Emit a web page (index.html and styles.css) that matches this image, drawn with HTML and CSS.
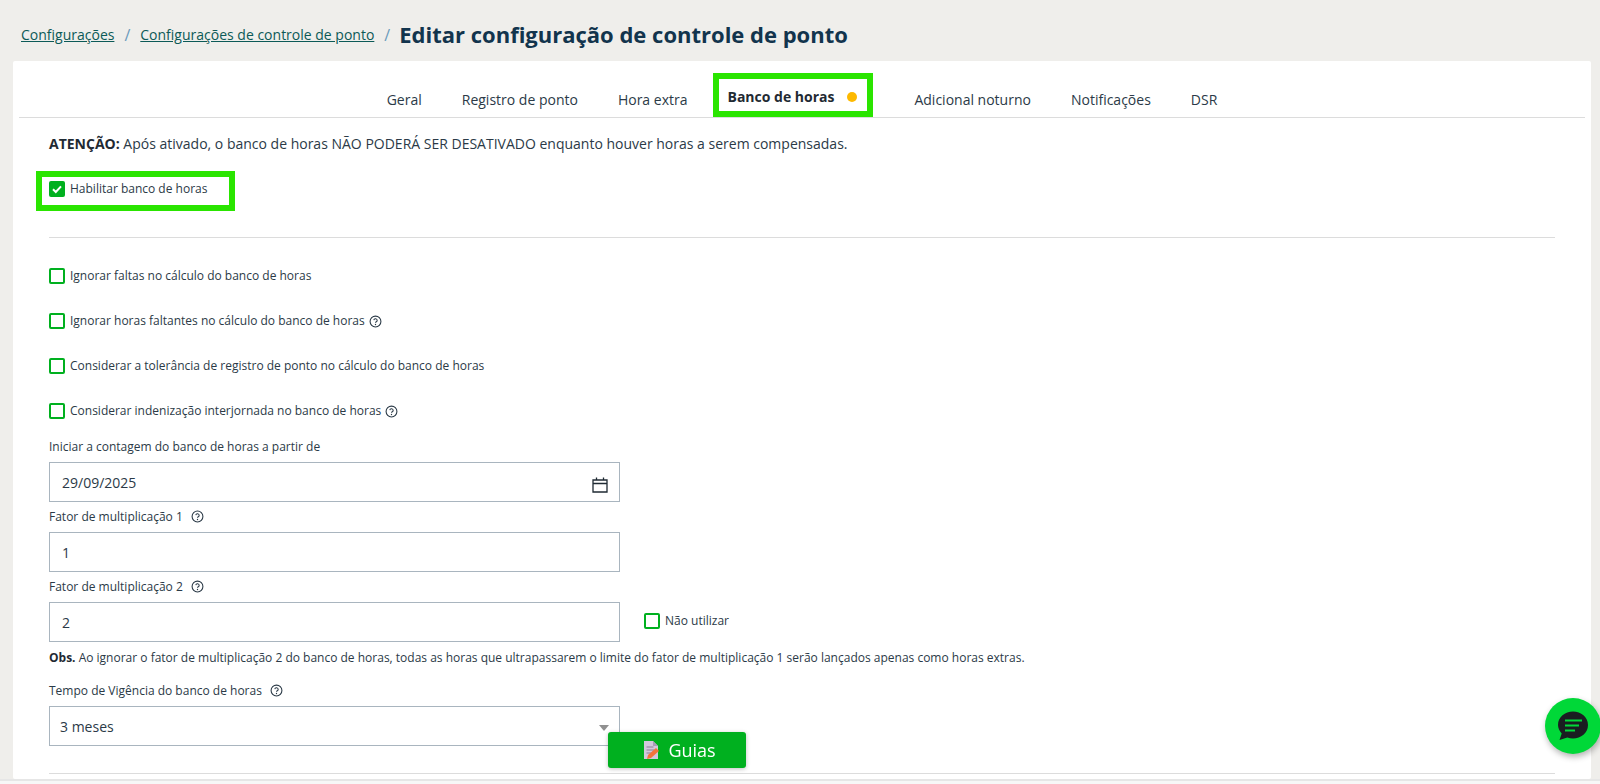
FILE: index.html
```html
<!DOCTYPE html>
<html lang="pt-BR">
<head>
<meta charset="utf-8">
<title>Editar configuração de controle de ponto</title>
<link rel="stylesheet" href="styles.css">
</head>
<body>
<svg class="defs" width="0" height="0" aria-hidden="true"><defs>
<symbol id="help" viewBox="0 0 24 24"><circle cx="12" cy="12" r="10" fill="none" stroke="currentColor" stroke-width="2"/><path d="M8.800 9.300a3.200 3.200 0 0 1 6.300.7c0 2.200-3.100 2.600-3.100 4.300" fill="none" stroke="currentColor" stroke-width="2"/><circle cx="12" cy="17.400" r="1.300" fill="currentColor"/></symbol>
</defs></svg>
<header class="crumbs">
  <a href="#">Configurações</a><span class="sep">/</span>
  <a href="#">Configurações de controle de ponto</a><span class="sep">/</span>
  <h1>Editar configuração de controle de ponto</h1>
</header>
<main class="card">
  <nav class="tabs">
    <span class="tab">Geral</span>
    <span class="tab">Registro de ponto</span>
    <span class="tab">Hora extra</span>
    <span class="tab active">Banco de horas<i class="dot"></i></span>
    <span class="tab">Adicional noturno</span>
    <span class="tab">Notificações</span>
    <span class="tab">DSR</span>
  </nav>
  <section class="body">
    <p class="notice"><b>ATENÇÃO:</b> Após ativado, o banco de horas NÃO PODERÁ SER DESATIVADO enquanto houver horas a serem compensadas.</p>
    <div class="mark">
      <label class="check"><span class="box on"><svg viewBox="0 0 16 16"><path d="M4 8.300l2.800 2.700L12 5.400" fill="none" stroke="#fff" stroke-width="2"/></svg></span>Habilitar banco de horas</label>
    </div>
    <hr class="rule first">
    <label class="check row"><span class="box"></span>Ignorar faltas no cálculo do banco de horas</label>
    <label class="check row"><span class="box"></span>Ignorar horas faltantes no cálculo do banco de horas<svg class="help"><use href="#help"/></svg></label>
    <label class="check row"><span class="box"></span>Considerar a tolerância de registro de ponto no cálculo do banco de horas</label>
    <label class="check row"><span class="box"></span>Considerar indenização interjornada no banco de horas<svg class="help"><use href="#help"/></svg></label>

    <div class="label l-start">Iniciar a contagem do banco de horas a partir de</div>
    <div class="field">29/09/2025
      <svg class="cal" viewBox="0 0 16 16"><path d="M1 3h14v12H1zM1 6.500h14M4.500 .5v3M11.500 .5v3" fill="none" stroke="#1f2a33" stroke-width="1.300"/></svg>
    </div>
    <div class="label">Fator de multiplicação 1<svg class="help wide"><use href="#help"/></svg></div>
    <div class="field">1</div>
    <div class="label">Fator de multiplicação 2<svg class="help wide"><use href="#help"/></svg></div>
    <div class="inline">
      <div class="field">2</div>
      <label class="check nudge"><span class="box"></span>Não utilizar</label>
    </div>
    <p class="obs"><b>Obs.</b> Ao ignorar o fator de multiplicação 2 do banco de horas, todas as horas que ultrapassarem o limite do fator de multiplicação 1 serão lançados apenas como horas extras.</p>
    <div class="label l-time">Tempo de Vigência do banco de horas<svg class="help wide"><use href="#help"/></svg></div>
    <div class="field select">3 meses<i class="caret"></i></div>
    <hr class="rule last">
  </section>
</main>
<div class="foot"></div>
<button class="guias"><svg viewBox="0 0 18 20" width="18" height="20"><path d="M2 1h9l5 5v13H2z" fill="#d3c8dc"/><path d="M11 1l5 5h-5z" fill="#a99bb8"/><path d="M4.500 7h7M4.500 10h8M4.500 13h5" stroke="#8b7f98" stroke-width="1.100"/><path d="M5 19l1-4 8-7 3 3-8 7z" fill="#f4743b"/></svg>Guias</button>
<button class="chat" aria-label="Chat"><svg viewBox="0 0 32 32" width="32" height="32"><path d="M16 1.500c8 0 15 5.500 15 13.500s-7 13.500-15 13.500c-2 0-4-.3-5.700-1L2.500 30l2.200-6.500C2.500 21 1 18.200 1 15 1 7 8 1.500 16 1.500z" fill="#1a1d21"/><path d="M8 10.500h17M8 15.500h14M8 20.500h10" stroke="#00d838" stroke-width="2.200"/></svg></button>
```
FILE: styles.css
```css
* { box-sizing: border-box; }
html, body { height: 784px; overflow: hidden; }
body {
  margin: 0;
  background: #efeeeb;
  font-family: "Open Sans", sans-serif;
  color: #2b3a47;
  font-size: 12px;
}
.defs { position: absolute; }
.crumbs {
  height: 61px;
  padding: 8px 0 0 21px;
  display: flex;
  align-items: center;
  font-size: 14px;
}
.crumbs a { color: #0c5a57; text-decoration: underline; }
.sep { color: #6b9bbb; margin: 0 10px; font-size: 16px; }
.crumbs .sep:last-of-type { margin-right: 9px; }
h1 { margin: -2px 0 0; font-size: 22px; font-weight: 700; color: #12344d; }
.card {
  margin: 0 9px 0 13px;
  height: 718px;
  background: #fff;
  border-radius: 2px;
  padding: 0 6px;
}
.foot { height: 5px; background: #f7f7f7; border-top: 2px solid #e6e6e6; }
.tabs {
  height: 57px;
  display: flex;
  justify-content: center;
  align-items: flex-end;
  border-bottom: 1px solid #dcdcdc;
  font-size: 14px;
  color: #2b3a47;
}
.tab { padding: 0 20px; height: 44px; line-height: 54px; white-space: nowrap; }
.tab.active {
  margin: 0 21px 0 6px;
  padding: 4px 10px 0 8px;
  border: 6px solid #2ae500;
  line-height: 34px;
  font-weight: 700;
  color: #1f2a33;
  display: flex;
  align-items: center;
}
.dot { width: 10px; height: 10px; border-radius: 50%; background: #fdb900; margin-left: 13px; }
.body { padding: 0 30px; }
.notice { margin: 0; padding-top: 16px; line-height: 20px; font-size: 14px; }
.notice b { color: #1f2a33; }
.mark {
  margin: 17px 0 0 -13px;
  width: 199px;
  height: 40px;
  border: 6px solid #2ae500;
  padding: 4px 0 0 7px;
}
.check { display: flex; align-items: center; font-size: 12px; line-height: 16px; white-space: nowrap; }
.box {
  width: 16px; height: 16px;
  border: 2px solid #00b01f;
  border-radius: 2px;
  margin-right: 5px;
  flex: none;
  background: #fff;
}
.box.on { background: #00b01f; border: 0; display: block; }
.box svg { display: block; width: 16px; height: 16px; }
.rule { border: 0; border-top: 1px solid #dcdcdc; margin: 0; }
.rule.first { margin-top: 26px; margin-bottom: 30px; }
.rule.last { margin-top: 27px; }
.row { height: 16px; margin-bottom: 29px; }
.row:last-of-type { margin-bottom: 9px; }
.help { width: 13px; height: 13px; margin-left: 4px; color: #2b3a47; display: inline-block; flex: none; }
.help.wide { margin-left: 8px; vertical-align: -2px; }
.label { height: 30px; line-height: 29px; font-size: 12px; white-space: nowrap; }
.l-start { height: 34px; line-height: 38px; }
.l-time { height: 36px; line-height: 42px; }
.field {
  position: relative;
  width: 571px;
  height: 40px;
  border: 1px solid #a9b5bf;
  line-height: 40px;
  padding-left: 12px;
  font-size: 14px;
  color: #2b3a47;
}
.cal { position: absolute; width: 16px; height: 16px; right: 11px; top: 14px; }
.inline { display: flex; align-items: center; gap: 24px; }
.nudge { margin-bottom: 2px; }
.obs { margin: 0; padding-top: 6px; height: 28px; line-height: 20px; font-size: 12px; white-space: nowrap; }
.obs b { color: #1f2a33; }
.select { padding-left: 10px; }
.caret {
  position: absolute; right: 10px; top: 18px;
  border: 5px solid transparent; border-top: 6px solid #909090; border-bottom: 0;
}
.guias {
  position: fixed; left: 608px; top: 732px;
  width: 138px; height: 36px;
  border: 0; border-radius: 3px;
  padding: 0 0 0 4px;
  background: #00b01f;
  color: #fff;
  font: 400 18px "Open Sans", sans-serif;
  display: flex; align-items: center; justify-content: center; gap: 8px;
  box-shadow: 0 1px 4px rgba(0,0,0,.25);
}
.chat {
  position: fixed; left: 1545px; top: 698px;
  width: 56px; height: 56px;
  border: 0; border-radius: 50%;
  background: #00d838;
  display: flex; align-items: center; justify-content: center;
  padding: 0;
  box-shadow: 1px 3px 6px rgba(0,0,0,.3);
}
```
